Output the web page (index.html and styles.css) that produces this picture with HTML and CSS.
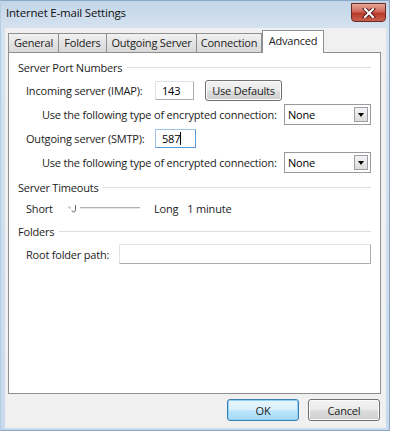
FILE: index.html
```html
<!DOCTYPE html>
<html lang="en">
<head>
  <meta charset="UTF-8" />
  <title>Internet E-mail Settings</title>
  <link rel="stylesheet" href="styles.css">
</head>
<body>
  <div class="window">
    <div class="titlebar">
      <span class="title">Internet E-mail Settings</span>
      <div class="close-btn">
        <svg width="14" height="10" viewBox="0 0 14 10">
          <path d="M3 1 L11 9 M11 1 L3 9" stroke="#5a2020" stroke-width="4" stroke-linecap="square"/>
          <path d="M3 1 L11 9 M11 1 L3 9" stroke="#ffffff" stroke-width="2" stroke-linecap="square"/>
        </svg>
      </div>
    </div>

    <div class="client">
      <div class="tabs">
        <div class="tab tab-general">General</div>
        <div class="tab tab-folders">Folders</div>
        <div class="tab tab-outgoing">Outgoing Server</div>
        <div class="tab tab-connection">Connection</div>
        <div class="tab tab-advanced active">Advanced</div>
      </div>

      <div class="panel">
        <div class="group-title"><span>Server Port Numbers</span><div class="rule"></div></div>

        <div class="row indent">
          <span class="lbl field">Incoming server (IMAP):</span>
          <div class="textbox port">143</div>
          <div class="button defaults">Use Defaults</div>
        </div>
        <div class="row indent2">
          <span class="lbl">Use the following type of encrypted connection:</span>
          <div class="combo"><span>None</span><div class="arrow"></div></div>
        </div>
        <div class="row indent">
          <span class="lbl field">Outgoing server (SMTP):</span>
          <div class="textbox port focus">587<span class="caret"></span></div>
        </div>
        <div class="row indent2">
          <span class="lbl">Use the following type of encrypted connection:</span>
          <div class="combo"><span>None</span><div class="arrow"></div></div>
        </div>

        <div class="group-title spaced"><span>Server Timeouts</span><div class="rule"></div></div>
        <div class="row indent slider-row">
          <span class="lbl short">Short</span>
          <div class="slider">
            <div class="track"></div>
            <svg class="thumb" width="12" height="8" viewBox="0 0 12 8">
              <path d="M1 1 V3 H3" fill="none" stroke="#b0b0b0" stroke-width="1"/>
              <path d="M7.5 0 V5 Q7.5 7 5.5 7 Q4 7 4 5.5" fill="none" stroke="#6a6a6a" stroke-width="1"/>
            </svg>
          </div>
          <span class="lbl long">Long</span>
          <span class="lbl">1 minute</span>
        </div>

        <div class="group-title spaced"><span>Folders</span><div class="rule"></div></div>
        <div class="row indent">
          <span class="lbl root">Root folder path:</span>
          <div class="textbox path"></div>
        </div>
      </div>

      <div class="footer">
        <div class="button ok">OK</div>
        <div class="button cancel">Cancel</div>
      </div>
    </div>
  </div>
</body>
</html>
```

FILE: styles.css
```css
html, body {
  margin: 0;
  padding: 0;
  background: #ffffff;
}

body {
  font-family: 'Open Sans', 'Noto Sans', sans-serif;
  font-size: 11px;
  letter-spacing: -0.2px;
  color: #000;
}

.window {
  width: 388px;
  height: 429px;
  border: 1px solid #8aa7c4;
  border-left-color: #b5cde4;
  background: linear-gradient(#c3d5e8, #d6e3f0 30px, #c8daec);
  display: flex;
  flex-direction: column;
}

.titlebar {
  height: 27px;
  display: flex;
  align-items: flex-start;
  justify-content: space-between;
}

.title {
  margin: 4px 0 0 5px;
  font-size: 11.5px;
  color: #111;
}

.close-btn {
  width: 33px;
  height: 17px;
  margin: 2px 3px 0 0;
  border: 1px solid #6a2a24;
  border-radius: 0 0 4px 4px;
  background: linear-gradient(#e8a79a, #d0685a 45%, #b83a2a 55%, #c8604e);
  display: flex;
  align-items: center;
  justify-content: center;
}

.client {
  flex: 1;
  margin: 0 3px 2px 4px;
  background: #f0f0f0;
  display: flex;
  flex-direction: column;
  padding: 2px 0 0 3px;
}

.tabs {
  display: flex;
  align-items: flex-end;
  height: 22px;
  position: relative;
  z-index: 1;
}

.tab {
  box-sizing: border-box;
  height: 19px;
  line-height: 18px;
  text-align: center;
  border: 1px solid #8e8f8f;
  border-bottom: none;
  margin-right: -1px;
  background: linear-gradient(#f2f2f2, #e3e3e3 50%, #d9d9d9);
  color: #222;
  white-space: nowrap;
}

.tab-general { width: 51px; }
.tab-folders { width: 49px; }
.tab-outgoing { width: 91px; }
.tab-connection { width: 66px; }

.tab.active {
  width: 62px;
  height: 23px;
  line-height: 19px;
  background: #ffffff;
  margin-bottom: -1px;
  margin-left: 1px;
}

.panel {
  width: 373px;
  height: 342px;
  border: 1px solid #8e8f8f;
  background: #ffffff;
  box-sizing: border-box;
  padding: 3px 9px 0 9px;
}

.group-title {
  display: flex;
  align-items: center;
  height: 22px;
  color: #1c1c1c;
}

.group-title.spaced {
  margin-top: 2px;
}

.rule {
  flex: 1;
  border-top: 1px solid #d5dfe5;
  margin-left: 5px;
  margin-top: 1px;
}

.row {
  display: flex;
  align-items: center;
  height: 24px;
}

.indent {
  padding-left: 8px;
}

.indent2 {
  padding-left: 24px;
}

.lbl {
  color: #1c1c1c;
  white-space: nowrap;
}

.field {
  width: 129px;
}

.textbox {
  height: 19px;
  box-sizing: border-box;
  border: 1px solid #abadb3;
  border-top-color: #e2e3ea;
  border-left-color: #e2e3ea;
  background: #ffffff;
  padding: 0 6px;
  line-height: 17px;
}

.port {
  width: 39px;
}

.textbox.focus {
  border-color: #5b9bd5;
  border-top-color: #9ec5e8;
  border-left-color: #9ec5e8;
  width: 41px;
}

.caret {
  display: inline-block;
  width: 1px;
  height: 13px;
  background: #000;
  vertical-align: -2px;
}

.button {
  box-sizing: border-box;
  border: 1px solid #707070;
  border-radius: 3px;
  background: linear-gradient(#f2f2f2, #ebebeb 50%, #dddddd 51%, #cfcfcf);
  box-shadow: inset 0 0 0 1px #fcfcfc;
  display: flex;
  align-items: center;
  justify-content: center;
  color: #1c1c1c;
}

.defaults {
  width: 77px;
  height: 21px;
  margin-left: 11px;
}

.combo {
  margin-left: auto;
  width: 87px;
  height: 21px;
  box-sizing: border-box;
  border: 1px solid #9a9a9a;
  background: #ffffff;
  display: flex;
  align-items: center;
  justify-content: space-between;
  padding: 0 2px 0 3px;
}

.arrow {
  width: 14px;
  height: 15px;
  box-sizing: border-box;
  border: 1px solid #9aa0a8;
  background: linear-gradient(#f4f4f4, #dcdcdc);
  position: relative;
}

.arrow::after {
  content: '';
  position: absolute;
  left: 3px;
  top: 5px;
  border-left: 3.5px solid transparent;
  border-right: 3.5px solid transparent;
  border-top: 4px solid #000;
}

.slider-row {
  height: 20px;
}

.short {
  width: 40px;
}

.slider {
  width: 76px;
  height: 12px;
  position: relative;
}

.track {
  position: absolute;
  left: 2px;
  right: 2px;
  top: 5px;
  height: 2px;
  border-top: 1px solid #b0b0b0;
  border-bottom: 1px solid #e8e8e8;
  box-sizing: border-box;
}

.thumb {
  position: absolute;
  left: 2px;
  top: 3px;
  background: #ffffff;
}

.long {
  margin-left: 12px;
  margin-right: 9px;
}

.root {
  width: 93px;
}

.path {
  flex: 1;
  height: 20px;
}

.footer {
  display: flex;
  justify-content: flex-end;
  padding: 5px 6px 0 0;
  gap: 9px;
}

.ok, .cancel {
  width: 72px;
  height: 22px;
}

.ok {
  border-color: #3c7fb1;
  background: linear-gradient(#eaf6fd, #d9f0fc 50%, #bee6fd 51%, #a7d9f5);
  box-shadow: inset 0 0 0 1px #8ed3f6;
}
```
